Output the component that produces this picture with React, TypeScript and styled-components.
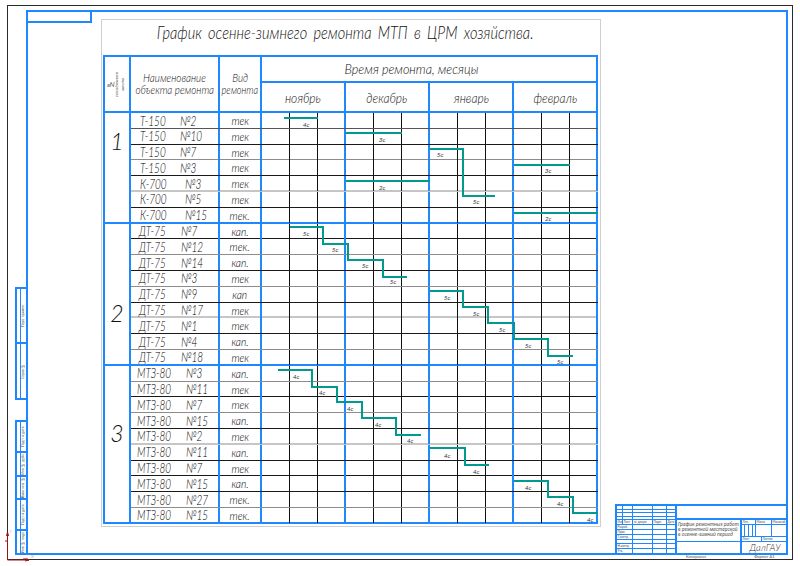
import React from 'react';
import styled, { createGlobalStyle } from 'styled-components';

const BLUE = '#1f88ff';
const TEAL = '#009a8e';
const FONT = `Lato, "Liberation Sans", sans-serif`;

const Global = createGlobalStyle`
  html, body { margin: 0; padding: 0; background: #fff; }
  body { font-family: ${FONT}; font-weight: 300; color: #2a2a2a; }
  * { box-sizing: border-box; }
`;

const Sheet = styled.div`
  position: relative;
  width: 800px;
  height: 566px;
  padding: 5px 7px 6px 7px;
  background: #fff;
  overflow: hidden;
`;

const BlackFrame = styled.div`
  display: flex;
  height: 100%;
  border: 1px solid #2a2a2a;
`;

const LeftStrip = styled.div`
  width: 18px;
  flex-shrink: 0;
  display: flex;
  flex-direction: column;
  align-items: flex-end;
`;

const LStamp = styled.div<{ $top: number; $h: number }>`
  margin-top: ${p => p.$top}px;
  width: 11px;
  height: ${p => p.$h}px;
  border: 2px solid ${BLUE};
  border-right: none;
  display: flex;
  flex-direction: column;
`;

const LCell = styled.div<{ $f: number; $last?: boolean }>`
  flex: ${p => p.$f};
  display: flex;
  border-bottom: ${p => (p.$last ? 'none' : `2px solid ${BLUE}`)};
`;

const LCellLeft = styled.div`
  width: 4px;
  border-right: 1px solid ${BLUE};
`;

const LCellText = styled.div`
  flex: 1;
  writing-mode: vertical-rl;
  transform: rotate(180deg);
  font-size: 3.5px;
  line-height: 5px;
  font-weight: 400;
  color: #444;
  text-align: center;
  overflow: hidden;
  white-space: nowrap;
`;

const MainCol = styled.div`
  flex: 1;
  display: flex;
  flex-direction: column;
  padding: 4px 4px 0 0;
`;

const BlueFrame = styled.div`
  flex: 1;
  border: 2px solid ${BLUE};
  display: flex;
  align-items: flex-start;
`;

const CornerBox = styled.div`
  width: 64px;
  height: 11px;
  flex-shrink: 0;
  border-right: 2px solid ${BLUE};
  border-bottom: 2px solid ${BLUE};
`;

const Paper = styled.div`
  margin: 7px 0 0 9px;
  width: 500px;
  height: 508px;
  flex-shrink: 0;
  border: 1px solid #cfcfcf;
  display: flex;
  flex-direction: column;
`;

const Squeeze = styled.span<{ $s: number; $o?: string }>`
  display: inline-block;
  white-space: nowrap;
  transform: scaleX(${p => p.$s});
  transform-origin: ${p => p.$o || 'center'};
`;

const Title = styled.div`
  height: 35px;
  padding: 3px 12px 0 0;
  text-align: center;
  font-size: 17px;
  line-height: 20px;
  font-style: italic;
  word-spacing: 3px;
  color: #111;
`;

const Table = styled.div`
  margin-left: 1px;
  width: 495px;
  border-left: 2px solid ${BLUE};
  border-top: 2px solid ${BLUE};
`;

const Head = styled.div`
  display: grid;
  grid-template-columns: 26px 89px 42px 336px;
  grid-template-rows: 26px 30px;
`;

const HeadCell = styled.div<{ $rows?: string }>`
  grid-row: ${p => p.$rows || 'auto'};
  border-right: 2px solid ${BLUE};
  border-bottom: 2px solid ${BLUE};
  display: flex;
  flex-direction: column;
  align-items: center;
  justify-content: center;
  text-align: center;
  font-style: italic;
  font-size: 11.5px;
  line-height: 12.5px;
  color: #111;
  overflow: hidden;
`;

const RotHead = styled.div`
  writing-mode: vertical-rl;
  transform: rotate(180deg);
  font-size: 4.5px;
  line-height: 6px;
  font-weight: 400;
  text-align: center;
  color: #555;
  white-space: nowrap;
`;

const RotNo = styled.span`
  font-size: 7px;
`;

const TimeHead = styled(HeadCell)`
  font-size: 14px;
  padding-right: 36px;
`;

const Months = styled.div`
  grid-column: 4;
  display: flex;
`;

const Month = styled.div`
  width: 84px;
  border-right: 2px solid ${BLUE};
  border-bottom: 2px solid ${BLUE};
  display: flex;
  align-items: center;
  justify-content: center;
  font-style: italic;
  font-size: 14px;
  color: #111;
`;

const Body = styled.div`
  position: relative;
`;

const Group = styled.div`
  display: grid;
  grid-template-columns: 26px 1fr;
`;

const GroupNum = styled.div<{ $top: number }>`
  border-right: 2px solid ${BLUE};
  border-bottom: 2px solid ${BLUE};
  padding-top: ${p => p.$top}px;
  text-align: center;
  font-style: italic;
  font-size: 23px;
  line-height: 22px;
  color: #111;
`;

const LINES: Record<string, string> = {
  d: '1px solid #555',
  k: '1px solid #1a1a1a',
  g: '1px solid #8c8c8c',
  l: '2px solid #c6c6c6',
  b: `2px solid ${BLUE}`,
};

const Row = styled.div<{ $line: string }>`
  display: grid;
  grid-template-columns: 89px 42px repeat(12, 28px);
  height: 15.8px;
  border-bottom: ${p => LINES[p.$line]};
`;

const NameCell = styled.div<{ $pad: number }>`
  display: flex;
  align-items: center;
  padding-left: ${p => p.$pad}px;
  border-right: 2px solid ${BLUE};
  font-style: italic;
  font-size: 13.5px;
  color: #000;
  white-space: nowrap;
  overflow: hidden;
`;

const Model = styled.span<{ $w: number }>`
  display: inline-block;
  width: ${p => p.$w}px;
`;

const TypeCell = styled.div`
  display: flex;
  align-items: center;
  justify-content: center;
  border-right: 2px solid ${BLUE};
  font-style: italic;
  font-size: 12px;
  color: #000;
  white-space: nowrap;
`;

const Slot = styled.div<{ $end: boolean }>`
  border-right: ${p => (p.$end ? `2px solid ${BLUE}` : '1px solid #111')};
`;

const Bars = styled.svg`
  position: absolute;
  left: 157px;
  top: 0;
  pointer-events: none;
  overflow: visible;
`;

const RightCol = styled.div`
  flex: 1;
  align-self: stretch;
  display: flex;
  flex-direction: column;
  justify-content: flex-end;
  padding-left: 14px;
`;

const Stamp = styled.div`
  height: 49px;
  border-top: 2px solid ${BLUE};
  border-left: 2px solid ${BLUE};
  display: flex;
`;

const StampLeft = styled.div`
  width: 60px;
  border-right: 2px solid ${BLUE};
  display: flex;
  flex-direction: column;
`;

const SRow = styled.div<{ $cols: string; $bold?: boolean; $last?: boolean }>`
  flex: 1;
  display: grid;
  grid-template-columns: ${p => p.$cols};
  border-bottom: ${p => (p.$last ? 'none' : p.$bold ? `1.5px solid ${BLUE}` : `1px solid ${BLUE}`)};
`;

const SCell = styled.div<{ $last?: boolean }>`
  border-right: ${p => (p.$last ? 'none' : `1px solid ${BLUE}`)};
  font-size: 3px;
  line-height: 4px;
  font-weight: 400;
  color: #444;
  padding-left: 0.5px;
  white-space: nowrap;
  overflow: hidden;
`;

const StampRight = styled.div`
  flex: 1;
  display: flex;
  flex-direction: column;
`;

const TopField = styled.div`
  height: 14px;
  border-bottom: 2px solid ${BLUE};
`;

const StampLower = styled.div`
  flex: 1;
  display: flex;
`;

const MidCol = styled.div`
  width: 65px;
  border-right: 2px solid ${BLUE};
  display: flex;
  flex-direction: column;
`;

const DocName = styled.div`
  height: 22px;
  border-bottom: 1px solid ${BLUE};
  padding: 2px 0 0 1px;
  font-size: 5.2px;
  line-height: 5px;
  font-style: italic;
  font-weight: 400;
  color: #555;
  white-space: nowrap;
  overflow: hidden;
`;

const RCol = styled.div`
  flex: 1;
  display: flex;
  flex-direction: column;
`;

const RRow = styled.div<{ $h: number; $cols: string }>`
  height: ${p => p.$h}px;
  display: grid;
  grid-template-columns: ${p => p.$cols};
  border-bottom: 1px solid ${BLUE};
`;

const Org = styled.div`
  flex: 1;
  display: flex;
  align-items: center;
  justify-content: center;
  font-style: italic;
  font-size: 9.5px;
  color: #333;
  padding-left: 2px;
`;

const Captions = styled.div`
  height: 4px;
  display: flex;
  padding-left: 660px;
  gap: 48px;
  font-size: 4px;
  line-height: 4px;
  font-weight: 400;
  color: #555;
`;

const Origin = styled.svg`
  position: absolute;
  left: 0;
  top: 526px;
`;

type Item = { m: string; n: string; t: string; w: number };
type G = {
  num: string;
  top: number;
  pad: number;
  items: Item[];
  lines: string[];
};

const NAME_SCALE = 0.74;

const mk = (m: string, w: number, list: [string, string][]) =>
  list.map(([n, t]) => ({ m, w: w / NAME_SCALE, n, t }));

const groups: G[] = [
  {
    num: '1',
    top: 17,
    pad: 9,
    items: [
      ...mk('Т-150', 40, [
        ['№2', 'тек'],
        ['№10', 'тек'],
        ['№7', 'тек'],
        ['№3', 'тек'],
      ]),
      ...mk('К-700', 45, [
        ['№3', 'тек'],
        ['№5', 'тек'],
        ['№15', 'тек.'],
      ]),
    ],
    lines: ['d', 'k', 'g', 'k', 'l', 'k', 'b'],
  },
  {
    num: '2',
    top: 78,
    pad: 8,
    items: mk('ДТ-75', 42, [
      ['№7', 'кап.'],
      ['№12', 'тек.'],
      ['№14', 'кап.'],
      ['№3', 'тек'],
      ['№9', 'кап'],
      ['№17', 'тек'],
      ['№1', 'тек'],
      ['№4', 'кап.'],
      ['№18', 'тек'],
    ]),
    lines: ['k', 'g', 'k', 'g', 'k', 'l', 'k', 'g', 'b'],
  },
  {
    num: '3',
    top: 56,
    pad: 6,
    items: mk('МТЗ-80', 49, [
      ['№3', 'кап.'],
      ['№11', 'тек'],
      ['№7', 'тек'],
      ['№15', 'кап.'],
      ['№2', 'тек'],
      ['№11', 'кап.'],
      ['№7', 'тек'],
      ['№15', 'кап.'],
      ['№27', 'тек.'],
      ['№15', 'тек.'],
    ]),
    lines: ['g', 'k', 'g', 'k', 'l', 'k', 'k', 'k', 'g', 'b'],
  },
];

const X0 = 262;
const Y0 = 113;
type Bar = { d: [number, number][]; labels: [string, number, number][] };
const bars: Bar[] = [
  { d: [[284, 118], [318, 118]], labels: [['4с', 306, 127]] },
  { d: [[346, 133], [402, 133]], labels: [['3с', 382, 142]] },
  { d: [[430, 149], [463, 149], [463, 196], [495, 196]], labels: [['5с', 440, 157], ['5с', 476, 204]] },
  { d: [[514, 165], [570, 165]], labels: [['3с', 548, 173]] },
  { d: [[346, 181], [430, 181]], labels: [['2с', 382, 190]] },
  { d: [[514, 213], [598, 213]], labels: [['2с', 548, 221]] },
  {
    d: [[290, 227], [323, 227], [323, 244], [348, 244], [348, 260], [383, 260], [383, 277], [407, 277]],
    labels: [['5с', 306, 236], ['5с', 335, 252], ['5с', 365, 268], ['5с', 393, 284]],
  },
  {
    d: [[430, 291], [463, 291], [463, 307], [488, 307], [488, 323], [514, 323], [514, 339], [548, 339], [548, 356], [573, 356]],
    labels: [['5с', 447, 300], ['5с', 476, 316], ['5с', 502, 332], ['5с', 528, 348], ['5с', 560, 364]],
  },
  {
    d: [[278, 370], [312, 370], [312, 387], [337, 387], [337, 402], [362, 402], [362, 418], [396, 418], [396, 435], [421, 435]],
    labels: [['4с', 296, 379], ['4с', 322, 395], ['4с', 350, 411], ['4с', 378, 427], ['4с', 410, 443]],
  },
  { d: [[430, 448], [465, 448], [465, 465], [489, 465]], labels: [['4с', 447, 458], ['4с', 476, 474]] },
  {
    d: [[514, 481], [548, 481], [548, 497], [573, 497], [573, 513], [598, 513]],
    labels: [['4с', 528, 490], ['4с', 560, 506], ['4с', 590, 522]],
  },
];

const toPath = (pts: [number, number][]) =>
  pts.map(([x, y], i) => `${i ? 'L' : 'M'}${x - X0} ${y - Y0}`).join(' ');

const upperLeft = ['', '', '', ''];
const headerLabels = ['Изм.', 'Лист', '№ докум.', 'Подп.', 'Дата'];
const personRows = ['Разраб.', 'Пров.', 'Т.контр.', '', 'Н.контр.', 'Утв.'];

export default function App() {
  return (
    <>
      <Global />
      <Sheet>
        <BlackFrame>
          <LeftStrip>
            <LStamp $top={281} $h={113}>
              <LCell $f={56}>
                <LCellLeft />
                <LCellText>Перв. примен.</LCellText>
              </LCell>
              <LCell $f={57} $last>
                <LCellLeft />
                <LCellText>Справ. №</LCellText>
              </LCell>
            </LStamp>
            <LStamp $top={20} $h={135}>
              <LCell $f={33}>
                <LCellLeft />
                <LCellText>Подп. и дата</LCellText>
              </LCell>
              <LCell $f={24}>
                <LCellLeft />
                <LCellText>Инв. № дубл.</LCellText>
              </LCell>
              <LCell $f={22}>
                <LCellLeft />
                <LCellText>Взам. инв. №</LCellText>
              </LCell>
              <LCell $f={33}>
                <LCellLeft />
                <LCellText>Подп. и дата</LCellText>
              </LCell>
              <LCell $f={23} $last>
                <LCellLeft />
                <LCellText>Инв. № подл.</LCellText>
              </LCell>
            </LStamp>
          </LeftStrip>
          <MainCol>
            <BlueFrame>
              <CornerBox />
              <Paper>
                <Title>
                  <Squeeze $s={0.86}>График осенне-зимнего ремонта МТП в ЦРМ хозяйства.</Squeeze>
                </Title>
                <Table>
                  <Head>
                    <HeadCell $rows="1 / 3">
                      <RotHead>
                        <RotNo>№</RotNo>
                        <br />
                        посадочного
                        <br />
                        места
                      </RotHead>
                    </HeadCell>
                    <HeadCell $rows="1 / 3">
                      <Squeeze $s={0.86}>Наименование</Squeeze>
                      <Squeeze $s={0.86}>объекта ремонта</Squeeze>
                    </HeadCell>
                    <HeadCell $rows="1 / 3">
                      <Squeeze $s={0.86}>Вид</Squeeze>
                      <Squeeze $s={0.8}>ремонта</Squeeze>
                    </HeadCell>
                    <TimeHead>
                      <Squeeze $s={0.9}>Время ремонта, месяцы</Squeeze>
                    </TimeHead>
                    <Months>
                      {['ноябрь', 'декабрь', 'январь', 'февраль'].map(m => (
                        <Month key={m}>
                          <Squeeze $s={0.86}>{m}</Squeeze>
                        </Month>
                      ))}
                    </Months>
                  </Head>
                  <Body>
                    {groups.map(g => (
                      <Group key={g.num}>
                        <GroupNum $top={g.top}>{g.num}</GroupNum>
                        <div>
                          {g.items.map((it, i) => (
                            <Row key={i} $line={g.lines[i]}>
                              <NameCell $pad={g.pad}>
                                <Squeeze $s={NAME_SCALE} $o="left">
                                  <Model $w={it.w}>{it.m}</Model>
                                  {it.n}
                                </Squeeze>
                              </NameCell>
                              <TypeCell>
                                <Squeeze $s={0.86}>{it.t}</Squeeze>
                              </TypeCell>
                              {Array.from({ length: 12 }, (_, k) => (
                                <Slot key={k} $end={k % 3 === 2} />
                              ))}
                            </Row>
                          ))}
                        </div>
                      </Group>
                    ))}
                    <Bars width={336} height={411} viewBox="0 0 336 411">
                      {bars.map((b, i) => (
                        <g key={i}>
                          <path d={toPath(b.d)} fill="none" stroke={TEAL} strokeWidth={2} />
                          {b.labels.map(([t, x, y], j) => (
                            <text
                              key={j}
                              x={x - X0}
                              y={y - Y0}
                              fontSize={6.5}
                              fontStyle="italic"
                              fontWeight={400}
                              textAnchor="middle"
                              fill="#333"
                              fontFamily={FONT}
                            >
                              {t}
                            </text>
                          ))}
                        </g>
                      ))}
                    </Bars>
                  </Body>
                </Table>
              </Paper>
              <RightCol>
                <Stamp>
                  <StampLeft>
                    {upperLeft.map((_, i) => (
                      <SRow key={i} $cols="6px 10px 20px 14px 1fr">
                        {[0, 1, 2, 3, 4].map(k => (
                          <SCell key={k} $last={k === 4} />
                        ))}
                      </SRow>
                    ))}
                    <SRow $cols="6px 10px 20px 14px 1fr" $bold>
                      {headerLabels.map((l, k) => (
                        <SCell key={k} $last={k === 4}>
                          {l}
                        </SCell>
                      ))}
                    </SRow>
                    {personRows.map((l, i) => (
                      <SRow key={i} $cols="16px 20px 14px 1fr" $last={i === personRows.length - 1}>
                        <SCell>{l}</SCell>
                        <SCell />
                        <SCell />
                        <SCell $last />
                      </SRow>
                    ))}
                  </StampLeft>
                  <StampRight>
                    <TopField />
                    <StampLower>
                      <MidCol>
                        <DocName>
                          График ремонтных работ
                          <br />
                          в ремонтной мастерской
                          <br />в осенне-зимний период
                        </DocName>
                      </MidCol>
                      <RCol>
                        <RRow $h={5} $cols="14px 16px 1fr">
                          <SCell>Лит.</SCell>
                          <SCell>Масса</SCell>
                          <SCell $last>Масштаб</SCell>
                        </RRow>
                        <RRow $h={12} $cols="3px 4px 4px 3px 16px 1fr">
                          <SCell />
                          <SCell />
                          <SCell />
                          <SCell />
                          <SCell />
                          <SCell $last />
                        </RRow>
                        <RRow $h={5} $cols="20px 1fr">
                          <SCell>Лист</SCell>
                          <SCell $last>Листов</SCell>
                        </RRow>
                        <Org>ДалГАУ</Org>
                      </RCol>
                    </StampLower>
                  </StampRight>
                </Stamp>
              </RightCol>
            </BlueFrame>
            <Captions>
              <span>Копировал</span>
              <span>Формат А1</span>
            </Captions>
          </MainCol>
        </BlackFrame>
        <Origin width={40} height={40} viewBox="0 0 40 40">
          <path d="M7.5 7 V34 H29" fill="none" stroke="#a01010" strokeWidth={1} />
          <path d="M5 15 H8 M7.5 6 L6.5 10 M7.5 6 L8.5 10" fill="none" stroke="#a01010" strokeWidth={1} />
          <path d="M23 33 H28 M29 34 L25 33 M29 34 L25 35" fill="none" stroke="#a01010" strokeWidth={1} />
          <text x={9.5} y={7} fontSize={4} fill="#777" fontFamily={FONT}>Y</text>
          <text x={31} y={32} fontSize={4.5} fill="#777" fontFamily={FONT}>X</text>
        </Origin>
      </Sheet>
    </>
  );
}
